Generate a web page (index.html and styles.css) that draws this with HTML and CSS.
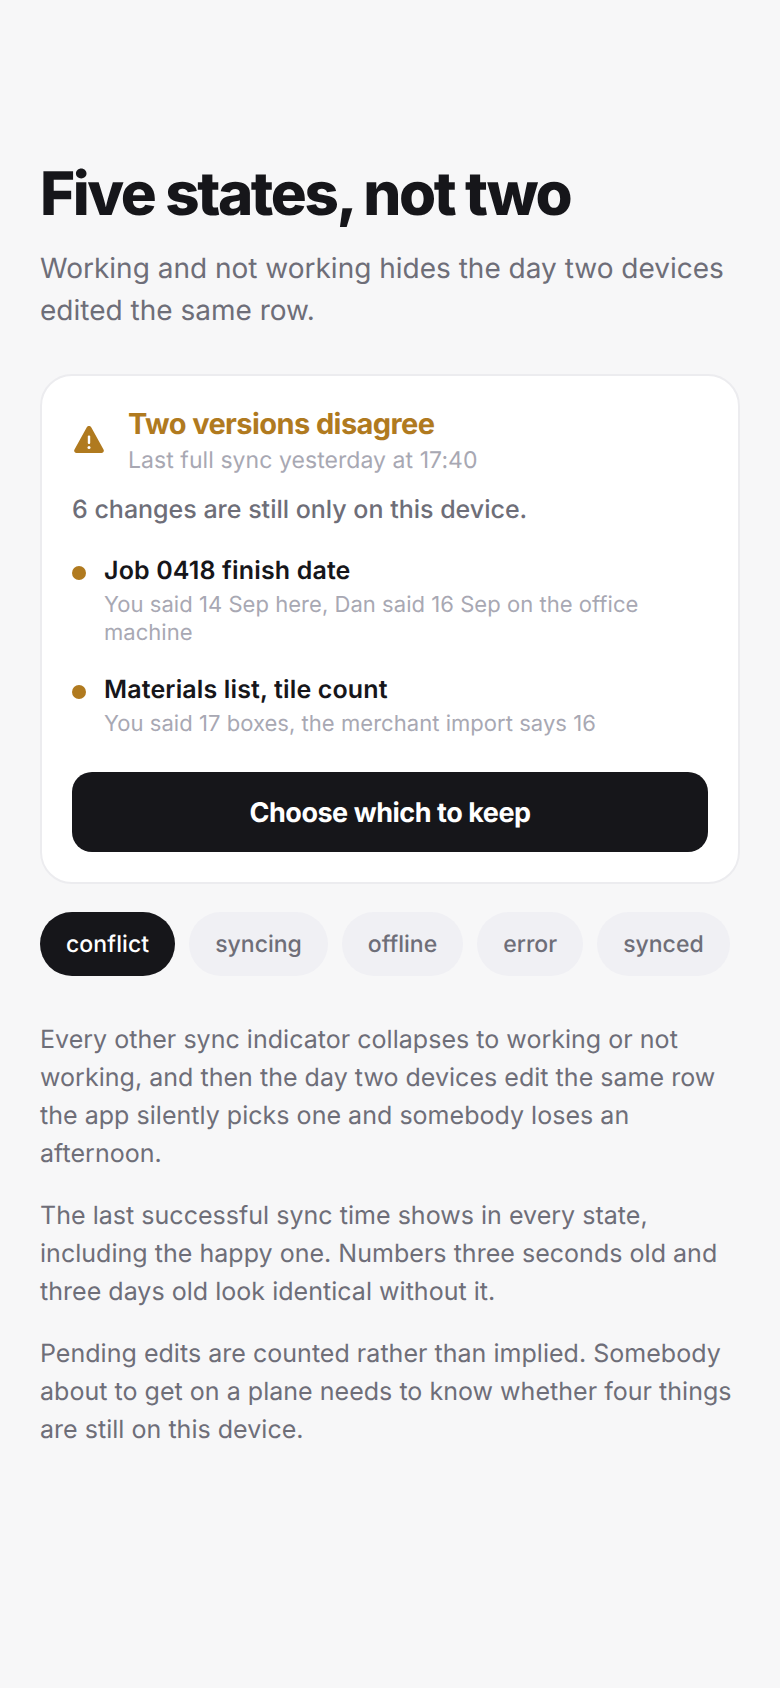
FILE: index.html
```html
<!DOCTYPE html>
<html lang="en">
<head>
<meta charset="utf-8">
<title>Five states, not two</title>
<link rel="stylesheet" href="styles.css">
</head>
<body>
<main class="page">
  <h1 class="title">Five states, not two</h1>
  <p class="lede">Working and not working hides the day two devices edited the same row.</p>
  <section class="card">
    <header class="head">
      <svg class="warn" viewBox="0 0 32 32" width="32" height="32"><path fill="#b07a1f" d="M17 1c-.9 0-1.700.5-2.200 1.300L2.500 24.500C1.500 26.300 2.700 28 4.500 28h25c1.800 0 3-1.700 2-3.500L19.200 2.300C18.700 1.500 17.900 1 17 1z"/><rect x="15.800" y="10.500" width="2.400" height="8.500" rx="1.100" fill="#fff"/><circle cx="17" cy="22.500" r="1.500" fill="#fff"/></svg>
      <div class="head-text">
        <div class="state">Two versions disagree</div>
        <div class="last">Last full sync yesterday at 17:40</div>
      </div>
    </header>
    <p class="pending">6 changes are still only on this device.</p>
    <ul class="items">
      <li class="item"><span class="dot"></span><div><div class="item-title">Job 0418 finish date</div><div class="item-sub">You said 14 Sep here, Dan said 16 Sep on the office machine</div></div></li>
      <li class="item"><span class="dot"></span><div><div class="item-title">Materials list, tile count</div><div class="item-sub">You said 17 boxes, the merchant import says 16</div></div></li>
    </ul>
    <button class="action">Choose which to keep</button>
  </section>
  <nav class="tabs">
    <span class="tab active">conflict</span>
    <span class="tab">syncing</span>
    <span class="tab">offline</span>
    <span class="tab">error</span>
    <span class="tab">synced</span>
  </nav>
  <div class="copy">
    <p>Every other sync indicator collapses to working or not working, and then the day two devices edit the same row the app silently picks one and somebody loses an afternoon.</p>
    <p>The last successful sync time shows in every state, including the happy one. Numbers three seconds old and three days old look identical without it.</p>
    <p>Pending edits are counted rather than implied. Somebody about to get on a plane needs to know whether four things are still on this device.</p>
  </div>
</main>
</body>
</html>
```
FILE: styles.css
```css
* { box-sizing: border-box; }
html, body { margin: 0; padding: 0; }
body { background: #f7f7f8; font-family: Inter, "Liberation Sans", sans-serif; color: #16161a; height: 1688px; overflow: hidden; text-rendering: geometricPrecision; font-optical-sizing: none; }
.page { padding: 158px 40px 0; }
.title { margin: 0 0 17px; font-size: 60px; line-height: 72px; font-weight: 800; letter-spacing: -2.4px; }
.lede { margin: 0 0 43px; font-size: 28px; line-height: 42px; color: #6e6e78; }
.card { background: #fff; border: 2px solid #ececef; border-radius: 32px; padding: 30px; }
.head { display: flex; align-items: center; gap: 24px; }
.warn { flex: none; }
.state { font-size: 29px; line-height: 36px; font-weight: 700; color: #b07a1f; letter-spacing: -0.58px; }
.last { margin-top: 2px; font-size: 23px; line-height: 32px; color: #a8a8b3; letter-spacing: 0.06px; }
.pending { margin: 16px 0 0; font-size: 25px; line-height: 36px; font-weight: 500; color: #6e6e78; }
.items { list-style: none; margin: 25px 0 0; padding: 0; display: flex; flex-direction: column; gap: 25px; }
.item { display: flex; gap: 18px; }
.dot { flex: none; width: 14px; height: 14px; border-radius: 50%; background: #b07a1f; margin-top: 13px; }
.item-title { font-size: 25px; line-height: 36px; font-weight: 600; color: #16161a; letter-spacing: 0.14px; }
.item-sub { margin-top: 2px; font-size: 22px; line-height: 28px; color: #a8a8b3; letter-spacing: 0.04px; }
.action { display: block; width: 100%; height: 80px; margin-top: 34px; border: 0; border-radius: 20px; background: #16161a; color: #fff; font: 700 27px Inter, sans-serif; letter-spacing: -0.47px; text-rendering: geometricPrecision; font-optical-sizing: none; }
.tabs { display: flex; gap: 14px; margin-top: 28px; }
.tab { height: 64px; padding: 0 26px; border-radius: 32px; background: #f0f0f4; color: #6e6e78; font-size: 23px; font-weight: 500; line-height: 64px; }
.tab.active { background: #16161a; color: #fff; letter-spacing: 0.1px; }
.copy { margin-top: 45px; font-size: 25px; line-height: 38px; color: #6e6e78; letter-spacing: 0.03px; }
.copy p { margin: 0 0 24px; }
```
